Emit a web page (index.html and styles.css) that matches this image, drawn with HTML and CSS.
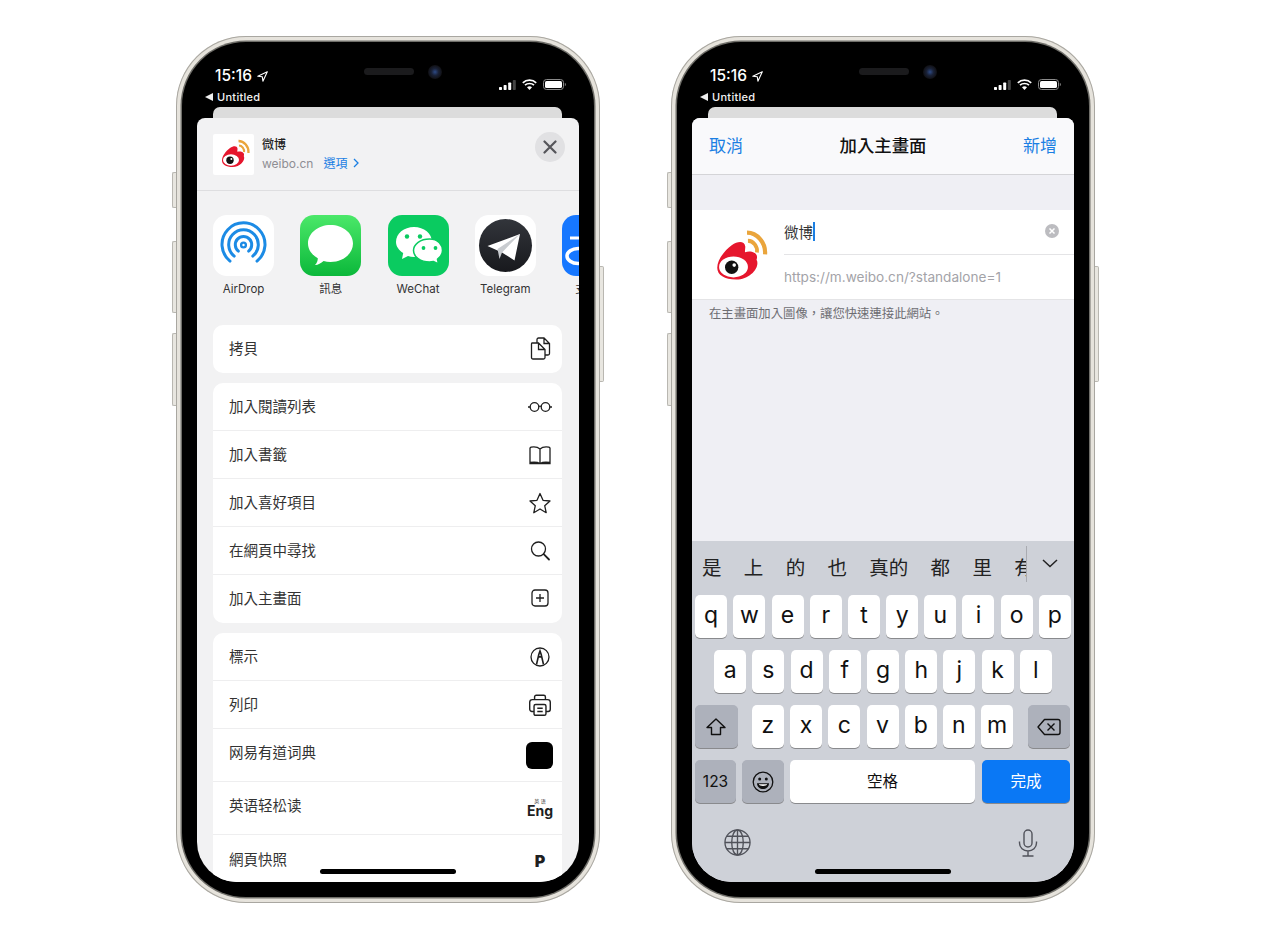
FILE: index.html
```html
<!DOCTYPE html>
<html lang="zh-Hant">
<head>
    <meta charset="UTF-8">
    <title>加入主畫面</title>
    <link rel="stylesheet" href="styles.css">
</head>
<body>

    <!-- shared drawings -->
    <svg class="defs" width="0" height="0">
        <symbol id="weibo" viewBox="0 0 41 41">
            <path fill="#e6162d" d="M9 26.500C9 22 13 17 17 14C20.500 11.500 24 11.500 24.500 14.500C24.700 16 24 17.300 24.500 17.800C27.500 16.800 31.500 18 31 21C31 21.500 30.500 22 31 22.500C32.500 26.500 27 33 19.500 33C13 33 9 30.500 9 26.500Z"/>
            <ellipse cx="18" cy="26" rx="8" ry="5.800" fill="#fff"/>
            <circle cx="17" cy="26.200" r="3.700" fill="#111"/>
            <circle cx="18.400" cy="25" r="1" fill="#fff"/>
            <path fill="none" stroke="#eaa53c" stroke-width="2.300" d="M25.500 7C31 7 36 12.500 35.500 19"/>
            <path fill="none" stroke="#eaa53c" stroke-width="2.100" d="M26 11.500C29 11.500 31.500 14.800 31 18"/>
        </symbol>
        <symbol id="signal" viewBox="0 0 17 10">
            <rect x="0" y="7" width="3" height="3" rx=".7" fill="#fff"/>
            <rect x="4.600" y="5" width="3" height="5" rx=".7" fill="#fff"/>
            <rect x="9.200" y="2.600" width="3" height="7.400" rx=".7" fill="#fff"/>
            <rect x="13.800" y="0" width="3" height="10" rx=".7" fill="#444"/>
        </symbol>
        <symbol id="wifi" viewBox="0 0 15 11">
            <path fill="none" stroke="#fff" stroke-width="1.700" d="M.8 3.800C4.400 .3 10.600 .3 14.200 3.800M3 6.200C5.400 3.900 9.600 3.900 12 6.200"/>
            <path fill="#fff" d="M5 8.300C6.400 7 8.600 7 10 8.300L7.500 11Z"/>
        </symbol>
        <symbol id="battery" viewBox="0 0 23 11">
            <rect x=".5" y=".5" width="20" height="10" rx="3" fill="none" stroke="#8a8a8a"/>
            <rect x="2" y="2" width="17" height="7" rx="1.600" fill="#fff"/>
            <path d="M21.800 3.800C22.600 4.200 23 4.800 23 5.500C23 6.200 22.600 6.800 21.800 7.200Z" fill="#777"/>
        </symbol>
        <symbol id="arrow" viewBox="0 0 11 11">
            <path fill="none" stroke="#fff" stroke-width="1.100" stroke-linejoin="round" d="M10.300 .7L.8 5.200L5.300 5.700L5.900 10.200Z"/>
        </symbol>
    </svg>

    <!-- left phone: share sheet -->
    <div class="phone">
        <i class="side side-a"></i><i class="side side-b"></i><i class="side side-c"></i><i class="side side-d"></i>
        <div class="bezel">
            <div class="speaker"></div>
            <div class="camera"></div>
            <div class="status">
                <div class="status-left">
                    <div class="clock">15:16 <svg class="loc"><use href="#arrow"/></svg></div>
                    <div class="back"><span class="back-tri"></span>Untitled</div>
                </div>
                <div class="status-right">
                    <svg class="st-signal"><use href="#signal"/></svg>
                    <svg class="st-wifi"><use href="#wifi"/></svg>
                    <svg class="st-battery"><use href="#battery"/></svg>
                </div>
            </div>
            <div class="screen">
                <div class="peek"></div>
                <div class="sheet">
                    <div class="share-head">
                        <div class="site-icon"><svg width="41" height="41"><use href="#weibo"/></svg></div>
                        <div class="site-info">
                            <div class="site-name">微博</div>
                            <div class="site-url">weibo.cn<span class="options">選項<svg class="chev" viewBox="0 0 6 10"><path d="M1 1l4 4-4 4" fill="none" stroke="#1b7fe3" stroke-width="1.300"/></svg></span></div>
                        </div>
                        <div class="close">
                            <svg viewBox="0 0 14 14" width="14" height="14"><path d="M1.500 1.500l11 11M12.500 1.500l-11 11" stroke="#55555a" stroke-width="2.200" stroke-linecap="round"/></svg>
                        </div>
                    </div>

                    <div class="apps">
                        <div class="app">
                            <svg class="app-icon" viewBox="0 0 61 61">
                                <rect width="61" height="61" rx="14" fill="#fff"/>
                                <g fill="none" stroke="#1c8be5" stroke-width="3" stroke-linecap="round">
                                    <path d="M17 46.100A21.500 21.500 0 1 1 44 46.100"/>
                                    <path d="M21.200 41.100A14.800 14.800 0 1 1 39.800 41.100"/>
                                    <path d="M25.400 36.100A8.200 8.200 0 1 1 35.600 36.100"/>
                                    <circle cx="30.500" cy="30" r="2.400" stroke-width="2.400"/>
                                </g>
                            </svg>
                            <div class="app-label">AirDrop</div>
                        </div>
                        <div class="app">
                            <svg class="app-icon" viewBox="0 0 61 61">
                                <defs><linearGradient id="msg" x1="0" y1="0" x2="0" y2="1"><stop offset="0" stop-color="#4be869"/><stop offset="1" stop-color="#0bb83a"/></linearGradient></defs>
                                <rect width="61" height="61" rx="14" fill="url(#msg)"/>
                                <path fill="#fff" d="M30.500 10C43 10 53 18.200 53 28.500C53 38.800 43 47 30.500 47C28 47 25.800 46.700 23.600 46.100C21 48.500 17.500 50.200 15 50C17 48 17.800 45.800 17.800 43.300C12 40 8 34.700 8 28.500C8 18.200 18 10 30.500 10Z"/>
                            </svg>
                            <div class="app-label">訊息</div>
                        </div>
                        <div class="app">
                            <svg class="app-icon" viewBox="0 0 61 61">
                                <rect width="61" height="61" rx="14" fill="#0acb60"/>
                                <path fill="#fff" d="M26 12C36 12 44 18.500 44 27C44 35.500 36 42 26 42C23.800 42 21.800 41.700 20 41.100L14 44L15.200 38C10.800 35.200 8 31.400 8 27C8 18.500 16 12 26 12Z"/>
                                <path fill="#fff" stroke="#0acb60" stroke-width="1.500" d="M41.500 24C50.500 24 54.500 30 54.500 35.500C54.500 38.800 52.500 42 49.500 44.200L50.500 49L45.500 46.500C44.200 46.800 43 47 41.500 47C32.500 47 25.500 42 25.500 35.500C25.500 29 32.500 24 41.500 24Z"/>
                                <circle cx="19" cy="21.500" r="2.200" fill="#0acb60"/><circle cx="32" cy="21.500" r="2.200" fill="#0acb60"/>
                                <circle cx="35.500" cy="33" r="1.900" fill="#0acb60"/><circle cx="47.500" cy="33" r="1.900" fill="#0acb60"/>
                            </svg>
                            <div class="app-label">WeChat</div>
                        </div>
                        <div class="app">
                            <svg class="app-icon" viewBox="0 0 61 61">
                                <defs><linearGradient id="tg" x1="0" y1="0" x2="0" y2="1"><stop offset="0" stop-color="#32353b"/><stop offset="1" stop-color="#18191d"/></linearGradient></defs>
                                <rect width="61" height="61" rx="14" fill="#fff"/>
                                <circle cx="30.500" cy="30.500" r="26.500" fill="url(#tg)"/>
                                <path fill="#fff" d="M12.500 31L45 19L39.500 45.500L27 37.500Z"/>
                                <path fill="#c9ccd0" d="M22.500 34L45 19L27 37.500L24.500 44Z"/>
                            </svg>
                            <div class="app-label">Telegram</div>
                        </div>
                        <div class="app">
                            <svg class="app-icon" viewBox="0 0 61 61">
                                <rect width="61" height="61" rx="14" fill="#1677ff"/>
                                <circle cx="20" cy="13" r="3" fill="#fff"/>
                                <path d="M8 23h11" stroke="#fff" stroke-width="3"/>
                                <ellipse cx="16" cy="41" rx="11" ry="7.500" fill="none" stroke="#fff" stroke-width="3.500"/>
                            </svg>
                            <div class="app-label">支付寶</div>
                        </div>
                    </div>

                    <div class="actions">
                        <div class="card">
                            <div class="row"><span>拷貝</span>
                                <svg class="row-icon" viewBox="0 0 24 24"><path d="M9 7V3.500C9 2.700 9.700 2 10.500 2H16L21.500 7.500V17.500C21.500 18.300 20.800 19 20 19H17.500M16 2V7.500H21.500M4 7H10.500L17 13.500V21.500C17 22.300 16.300 23 15.500 23H5C4 23 3.500 22.300 3.500 21.500V8C3.500 7.500 3.600 7 4 7ZM10.500 7V13.500H17"/></svg>
                            </div>
                        </div>
                        <div class="card">
                            <div class="row"><span>加入閱讀列表</span>
                                <svg class="row-icon" viewBox="0 0 24 24"><circle cx="6.500" cy="12" r="4.300"/><circle cx="17.500" cy="12" r="4.300"/><path d="M10.800 11.500C11.500 11 12.500 11 13.200 11.500M2.200 12H0M21.800 12H24"/></svg>
                            </div>
                            <div class="row"><span>加入書籤</span>
                                <svg class="row-icon" viewBox="0 0 24 24"><path d="M12 6C10 4.200 6 3.700 3 4.200L2 5V19.500C5 19 9.500 19 12 20.500C14.500 19 19 19 22 19.500V5L21 4.200C18 3.700 14 4.200 12 6ZM12 6V20.500M2 19.500V20.500H22V19.500"/></svg>
                            </div>
                            <div class="row"><span>加入喜好項目</span>
                                <svg class="row-icon" viewBox="0 0 24 24"><path stroke-linejoin="round" d="M12 2.500L15 9.300L22 10L16.700 14.700L18.200 21.700L12 18L5.800 21.700L7.300 14.700L2 10L9 9.300Z"/></svg>
                            </div>
                            <div class="row"><span>在網頁中尋找</span>
                                <svg class="row-icon" viewBox="0 0 24 24"><circle cx="10.500" cy="10" r="7"/><path stroke-linecap="round" stroke-width="1.800" d="M15.700 15.200L21 20.500"/></svg>
                            </div>
                            <div class="row"><span>加入主畫面</span>
                                <svg class="row-icon" viewBox="0 0 24 24"><rect x="4" y="4" width="16" height="16" rx="3"/><path d="M12 8v8M8 12h8"/></svg>
                            </div>
                        </div>
                        <div class="card">
                            <div class="row"><span>標示</span>
                                <svg class="row-icon" viewBox="0 0 24 24"><circle cx="12" cy="12" r="9"/><path stroke-width="1.600" d="M8.500 19.500L10.800 9.500L12 6L13.200 9.500L15.500 19.500M10.800 11.500C11.500 12 12.500 12 13.200 11.500"/></svg>
                            </div>
                            <div class="row"><span>列印</span>
                                <svg class="row-icon row-icon-big" viewBox="0 0 24 24"><path d="M7 7V4.500C7 3.700 7.700 3 8.500 3H15.500C16.300 3 17 3.700 17 4.500V7M6.500 18H4.500C3.500 18 2.500 17 2.500 16V9.500C2.500 8.200 3.500 7 5 7H19C20.500 7 21.500 8.200 21.500 9.500V16C21.500 17 20.500 18 19.500 18H17.500M8 11.500H16C17 11.500 17.500 12 17.500 13V20C17.500 21 17 21.500 16 21.500H8C7 21.500 6.500 21 6.500 20V13C6.500 12 7 11.500 8 11.500ZM9.500 15H14.500M9.500 18H14.500"/></svg>
                            </div>
                            <div class="row row-tall"><span>网易有道词典</span>
                                <div class="black-tile"></div>
                            </div>
                            <div class="row row-tall"><span>英语轻松读</span>
                                <div class="eng"><small>英 语</small><b>Eng</b></div>
                            </div>
                            <div class="row row-tall"><span>網頁快照</span>
                                <div class="pocket">P</div>
                            </div>
                        </div>
                    </div>
                </div>
                <div class="home-bar"></div>
            </div>
        </div>
    </div>

    <!-- right phone: add to home screen -->
    <div class="phone">
        <i class="side side-a"></i><i class="side side-b"></i><i class="side side-c"></i><i class="side side-d"></i>
        <div class="bezel">
            <div class="speaker"></div>
            <div class="camera"></div>
            <div class="status">
                <div class="status-left">
                    <div class="clock">15:16 <svg class="loc"><use href="#arrow"/></svg></div>
                    <div class="back"><span class="back-tri"></span>Untitled</div>
                </div>
                <div class="status-right">
                    <svg class="st-signal"><use href="#signal"/></svg>
                    <svg class="st-wifi"><use href="#wifi"/></svg>
                    <svg class="st-battery"><use href="#battery"/></svg>
                </div>
            </div>
            <div class="screen">
                <div class="peek"></div>
                <div class="sheet sheet-form">
                    <div class="nav">
                        <span class="nav-link">取消</span>
                        <span class="nav-title">加入主畫面</span>
                        <span class="nav-link">新增</span>
                    </div>
                    <div class="form-body">
                        <div class="form">
                            <div class="form-icon"><svg width="74" height="74"><use href="#weibo"/></svg></div>
                            <div class="form-fields">
                                <div class="field field-name">
                                    <span>微博</span><i class="caret"></i>
                                    <svg class="clear" viewBox="0 0 14 14"><circle cx="7" cy="7" r="7" fill="#bcbcc0"/><path d="M4.500 4.500l5 5M9.500 4.500l-5 5" stroke="#fff" stroke-width="1.500"/></svg>
                                </div>
                                <div class="field field-url">https://m.weibo.cn/?standalone=1</div>
                            </div>
                        </div>
                        <div class="caption">在主畫面加入圖像&#xFF0C;讓您快速連接此網站。</div>
                    </div>

                    <div class="keyboard">
                        <div class="candidates-bar">
                            <div class="candidates">
                                <span>是</span><span>上</span><span>的</span><span>也</span><span>真的</span><span>都</span><span>里</span><span>有</span>
                            </div>
                            <svg class="cand-more" viewBox="0 0 16 9"><path d="M1 1l7 6.500L15 1" fill="none" stroke="#222" stroke-width="1.500"/></svg>
                        </div>
                        <div class="key-row">
                            <div class="key">q</div><div class="key">w</div><div class="key">e</div><div class="key">r</div><div class="key">t</div><div class="key">y</div><div class="key">u</div><div class="key">i</div><div class="key">o</div><div class="key">p</div>
                        </div>
                        <div class="key-row">
                            <div class="key">a</div><div class="key">s</div><div class="key">d</div><div class="key">f</div><div class="key">g</div><div class="key">h</div><div class="key">j</div><div class="key">k</div><div class="key">l</div>
                        </div>
                        <div class="key-row key-row-split">
                            <div class="key key-fn key-wide">
                                <svg width="20" height="18" viewBox="0 0 20 18"><path d="M10 1L19 9.500H14.500V16.500H5.500V9.500H1Z" fill="none" stroke="#111" stroke-width="1.400" stroke-linejoin="round"/></svg>
                            </div>
                            <div class="key-group">
                                <div class="key">z</div><div class="key">x</div><div class="key">c</div><div class="key">v</div><div class="key">b</div><div class="key">n</div><div class="key">m</div>
                            </div>
                            <div class="key key-fn key-wide">
                                <svg width="24" height="18" viewBox="0 0 24 18"><path d="M7.500 1.500H21C22 1.500 23 2.500 23 3.500V14.500C23 15.500 22 16.500 21 16.500H7.500L1 9Z" fill="none" stroke="#111" stroke-width="1.400" stroke-linejoin="round"/><path d="M10.500 5.500l7 7M17.500 5.500l-7 7" stroke="#111" stroke-width="1.400"/></svg>
                            </div>
                        </div>
                        <div class="key-row key-row-bottom">
                            <div class="key key-fn key-123">123</div>
                            <div class="key key-fn key-emoji">
                                <svg width="22" height="22" viewBox="0 0 22 22"><circle cx="11" cy="11" r="9.800" fill="none" stroke="#111" stroke-width="1.300"/><circle cx="7.700" cy="8" r="1.500" fill="#111"/><circle cx="14.300" cy="8" r="1.500" fill="#111"/><path d="M5 12.200H17C17 16 14 18 11 18C8 18 5 16 5 12.200Z" fill="#111"/><path d="M6.800 13.300H15.200C15 14.500 13 15 11 15C9 15 7 14.500 6.800 13.300Z" fill="#fff"/></svg>
                            </div>
                            <div class="key key-space">空格</div>
                            <div class="key key-done">完成</div>
                        </div>
                        <div class="kb-tools">
                            <svg class="globe" viewBox="0 0 28 28"><circle cx="14" cy="14" r="13"/><ellipse cx="14" cy="14" rx="6" ry="13"/><path d="M14 1V27M1 14H27M3 7.500H25M3 20.500H25"/></svg>
                            <svg class="mic" viewBox="0 0 20 28"><rect x="6" y="1" width="8" height="17" rx="4"/><path d="M1.500 12.500V14C1.500 18.700 5.300 22 10 22C14.700 22 18.500 18.700 18.500 14V12.500M10 22V27M4.500 27H15.500"/></svg>
                        </div>
                    </div>
                </div>
                <div class="home-bar"></div>
            </div>
        </div>
    </div>

</body>
</html>
```

FILE: styles.css
```css
* {
    margin: 0;
    padding: 0;
    box-sizing: border-box;
}

body {
    width: 1280px;
    height: 943px;
    overflow: hidden;
    background-color: white;
    display: flex;
    gap: 71px;
    padding: 36px 0 0 176px;
    font-family: Inter, "Noto Sans CJK TC", sans-serif;
    color: #2b2b2e;
}

.defs {
    position: absolute;
}

/* ---------- phone body ---------- */

.phone {
    position: relative;
    width: 424px;
    height: 867px;
    padding: 6px;
    border-radius: 70px;
    background-color: #e6e3dc;
    box-shadow: inset 0 0 0 1px #a9a7a1;
}

.side {
    position: absolute;
    width: 4px;
    left: -4px;
    background-color: #e8e6e0;
    border: 1px solid #b9b7b1;
    border-right: none;
    border-radius: 2px 0 0 2px;
}

.side-a { top: 136px; height: 36px; }
.side-b { top: 205px; height: 72px; }
.side-c { top: 297px; height: 73px; }

.side-d {
    top: 230px;
    height: 116px;
    left: auto;
    right: -4px;
    border-right: 1px solid #b9b7b1;
    border-left: none;
    border-radius: 0 2px 2px 0;
}

.bezel {
    position: relative;
    height: 100%;
    display: flex;
    flex-direction: column;
    background-color: black;
    border-radius: 64px;
    box-shadow: 0 0 0 1.5px #6f6e69;
}

.speaker {
    position: absolute;
    left: 182px;
    top: 26px;
    width: 50px;
    height: 7px;
    border-radius: 4px;
    background-color: #1b1b1d;
}

.camera {
    position: absolute;
    left: 246px;
    top: 23px;
    width: 14px;
    height: 14px;
    border-radius: 50%;
    background: radial-gradient(circle, #2d4a86 0, #1a2238 35%, #101014 70%);
}

/* ---------- status bar ---------- */

.status {
    height: 65px;
    display: flex;
    justify-content: space-between;
    padding: 24px 28px 0 23px;
    color: white;
}

.clock {
    height: 20px;
    margin-left: 10px;
    font-size: 15.5px;
    font-weight: 500;
    line-height: 20px;
    display: flex;
    align-items: center;
    gap: 5px;
}

.loc {
    width: 11px;
    height: 11px;
}

.back {
    margin-top: 4px;
    font-size: 11px;
    font-weight: 500;
    line-height: 14px;
    letter-spacing: 0.3px;
    display: flex;
    align-items: center;
    color: #f2f2f2;
}

.back-tri {
    width: 0;
    height: 0;
    margin-right: 4px;
    border-top: 4px solid transparent;
    border-bottom: 4px solid transparent;
    border-right: 8px solid #eee;
}

.status-right {
    display: flex;
    gap: 6px;
    height: 11px;
    margin-top: 13px;
}

.st-signal { width: 17px; height: 10px; margin-top: 1px; }
.st-wifi { width: 15px; height: 11px; }
.st-battery { width: 23px; height: 11px; }

/* ---------- screen ---------- */

.screen {
    position: relative;
    flex: 1;
    min-height: 0;
    margin: 0 15px 15px;
    display: flex;
    flex-direction: column;
    overflow: hidden;
    border-radius: 0 0 40px 40px;
}

.peek {
    height: 11px;
    flex-shrink: 0;
    margin: 0 17px 0 16px;
    border-radius: 7px 7px 0 0;
    background-color: #dcdcdc;
}

.sheet {
    flex: 1;
    min-height: 0;
    overflow: hidden;
    border-radius: 8px 8px 0 0;
    background-color: #f2f2f3;
}

.home-bar {
    position: absolute;
    left: 123px;
    bottom: 8px;
    width: 136px;
    height: 5px;
    border-radius: 3px;
    background-color: black;
}

/* ---------- share sheet ---------- */

.share-head {
    height: 73px;
    display: flex;
    padding: 16px 14px 0 16px;
    border-bottom: 1px solid #dedee0;
}

.site-icon {
    width: 41px;
    height: 41px;
    background-color: white;
    border-radius: 2px;
}

.site-info {
    margin-left: 8px;
    flex: 1;
    padding-top: 1px;
}

.site-name {
    font-size: 12px;
    font-weight: 500;
    line-height: 20px;
    color: #222;
}

.site-url {
    font-size: 12px;
    line-height: 18px;
    color: #8e8e93;
}

.options {
    margin-left: 10px;
    color: #1b7fe3;
}

.chev {
    width: 6px;
    height: 10px;
    margin-left: 6px;
}

.close {
    width: 30px;
    height: 30px;
    margin-top: -2px;
    border-radius: 50%;
    background-color: #e1e1e3;
    display: flex;
    align-items: center;
    justify-content: center;
}

.apps {
    height: 134px;
    padding: 24px 0 0 16px;
    display: flex;
    gap: 26.25px;
}

.app {
    width: 61px;
    flex-shrink: 0;
    text-align: center;
}

.app-icon {
    display: block;
    width: 61px;
    height: 61px;
}

.app-label {
    margin-top: 5px;
    font-size: 11.5px;
    line-height: 16px;
    white-space: nowrap;
    color: #333;
}

.actions {
    padding: 0 17px 0 16px;
    display: flex;
    flex-direction: column;
    gap: 10px;
}

.card {
    border-radius: 10px;
    background-color: white;
}

.row {
    height: 48px;
    padding: 0 10px 2px 16px;
    display: flex;
    align-items: center;
    justify-content: space-between;
    font-size: 14.5px;
    color: #333;
    border-bottom: 1px solid #eeeeef;
}

.card .row:last-child {
    border-bottom: none;
    padding-bottom: 4px;
}

.row-tall,
.card .row-tall:last-child {
    height: 53px;
    padding-bottom: 7px;
}

.row-icon {
    width: 24px;
    height: 24px;
    margin-bottom: -2px;
    fill: none;
    stroke: #1f1f1f;
    stroke-width: 1.3;
}

.row-icon-big {
    width: 26px;
    height: 26px;
    margin-right: -1px;
}

.black-tile {
    width: 27px;
    height: 27px;
    margin-right: -1px;
    margin-bottom: -7px;
    border-radius: 6px;
    background-color: black;
}

.eng {
    width: 24px;
    margin-bottom: -8px;
    display: flex;
    flex-direction: column;
    align-items: center;
    line-height: 1;
    color: #1f1f1f;
}

.eng small {
    font-size: 5px;
    white-space: nowrap;
}

.eng b {
    font-size: 14px;
    font-weight: 700;
}

.pocket {
    width: 24px;
    margin-bottom: -6px;
    text-align: center;
    font-size: 16px;
    font-weight: 900;
    color: #1f1f1f;
}

/* ---------- add to home screen form ---------- */

.sheet-form {
    display: flex;
    flex-direction: column;
    background-color: #efeff4;
}

.nav {
    height: 57px;
    flex-shrink: 0;
    padding: 0 17px 3px;
    display: flex;
    align-items: center;
    justify-content: space-between;
    font-size: 17px;
    background-color: #f9f9fb;
    border-bottom: 1px solid #d4d4d7;
}

.nav-link {
    color: #1b7fe3;
}

.nav-title {
    font-size: 17.4px;
    font-weight: 500;
    color: #111;
}

.form-body {
    flex: 1;
    padding-top: 35px;
}

.form {
    height: 90px;
    display: flex;
    background-color: white;
    border-bottom: 1px solid #e4e4e6;
}

.form-icon {
    width: 92px;
    padding: 10px 0 0 9px;
}

.form-fields {
    flex: 1;
}

.field {
    display: flex;
    align-items: center;
}

.field-name {
    height: 45px;
    padding: 0 15px 2px 0;
    font-size: 14.5px;
    color: #333;
    border-bottom: 1px solid #e4e4e6;
}

.caret {
    width: 2px;
    height: 19px;
    background-color: #1b7fe3;
}

.clear {
    width: 14px;
    height: 14px;
    margin-left: auto;
}

.field-url {
    height: 44px;
    font-size: 13.6px;
    color: #a3a3a8;
    white-space: nowrap;
}

.caption {
    padding: 5px 0 0 17px;
    font-size: 12.35px;
    line-height: 18px;
    color: #6d6d72;
}

/* ---------- keyboard ---------- */

.keyboard {
    height: 341px;
    flex-shrink: 0;
    display: flex;
    flex-direction: column;
    gap: 12px;
    background-color: #ced1d8;
}

.candidates-bar {
    height: 42px;
    display: flex;
    flex-shrink: 0;
}

.candidates {
    width: 335px;
    height: 36px;
    margin-top: 5px;
    padding-left: 10px;
    display: flex;
    gap: 22.3px;
    align-items: center;
    overflow: hidden;
    font-size: 19.5px;
    color: #222;
    white-space: nowrap;
    border-right: 1px solid #a9abb1;
}

.candidates span {
    padding-top: 4px;
    flex-shrink: 0;
}

.cand-more {
    width: 16px;
    height: 9px;
    margin: 18px 0 0 15px;
}

.key-row {
    height: 43px;
    flex-shrink: 0;
    display: flex;
    justify-content: center;
    gap: 6.2px;
}

.key-row-split {
    justify-content: space-between;
    padding: 0 4px 0 3px;
}

.key-row-bottom {
    justify-content: flex-start;
    gap: 6px;
    padding-left: 3px;
}

.key-group {
    display: flex;
    gap: 6.2px;
}

.key {
    width: 32px;
    height: 43px;
    display: flex;
    align-items: center;
    justify-content: center;
    padding-bottom: 3px;
    font-size: 23px;
    color: #111;
    background-color: white;
    border-radius: 5px;
    box-shadow: 0 1px 0 #898a8d;
}

.key-fn {
    background-color: #adb1bb;
}

.key-wide {
    width: 42.5px;
    padding-bottom: 0;
}

.key-123 {
    width: 41px;
    font-size: 15.5px;
    padding-bottom: 0;
}

.key-emoji {
    width: 42px;
    padding-bottom: 0;
}

.key-space {
    width: 185px;
    font-size: 15.5px;
}

.key-done {
    width: 88px;
    margin-left: 1px;
    font-size: 15.5px;
    color: white;
    background-color: #0a78f5;
}

.kb-tools {
    margin-top: 14px;
    padding: 0 36px 0 32px;
    display: flex;
    justify-content: space-between;
}

.kb-tools svg {
    fill: none;
    stroke: #50525a;
    stroke-width: 1.4;
}

.globe {
    width: 27px;
    height: 27px;
}

.mic {
    width: 20px;
    height: 28px;
}
```
